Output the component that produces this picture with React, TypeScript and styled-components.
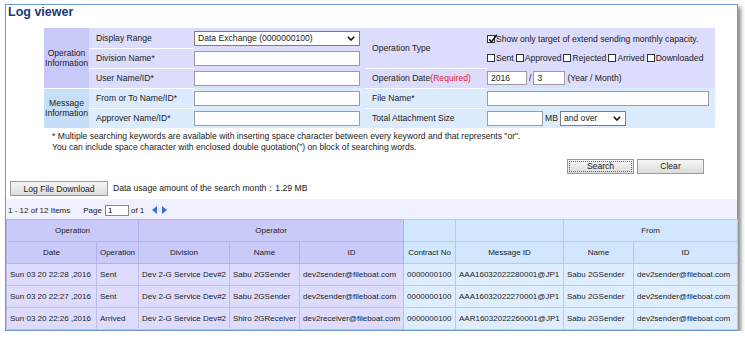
import React from "react";
import styled, { createGlobalStyle } from "styled-components";

const Global = createGlobalStyle`
  html, body { margin: 0; padding: 0; background: #fff; }
  body { font-family: "Liberation Sans", Arial, sans-serif; color: #222; }
  * { box-sizing: border-box; }
`;

const Frame = styled.div`
  margin: 4px 0 0 5px;
  width: 733px;
  border: 1px solid #6f9ad4;
  background: #fff;
  box-shadow: 3px 3px 4px rgba(0, 0, 0, 0.45);
`;

const Title = styled.h1`
  margin: 0;
  padding-left: 2px;
  height: 14px;
  line-height: 15px;
  font-size: 12.5px;
  font-weight: bold;
  color: #1c3a78;
`;

const FormTable = styled.table`
  border-collapse: collapse;
  table-layout: fixed;
  width: 671px;
  margin: 9px 0 0 38px;
  font-size: 8.6px;
`;

const FormRow = styled.tr`
  height: 20px;
`;

type Tone = "op" | "msg";

const SectionCell = styled.td<{ $tone: Tone }>`
  background: ${(p) => (p.$tone === "op" ? "#c9c9f9" : "#c6def8")};
  text-align: center;
  line-height: 10px;
  padding: 0;
  border-bottom: 1px solid #fff;
`;

const LabelCell = styled.td<{ $tone: Tone }>`
  background: ${(p) => (p.$tone === "op" ? "#dcdcfd" : "#dcecfe")};
  padding: 0 0 0 7px;
  white-space: nowrap;
  vertical-align: middle;
  border-bottom: 1px solid #fff;
`;

const ValueCell = styled.td<{ $tone: Tone }>`
  background: ${(p) => (p.$tone === "op" ? "#dcdcfd" : "#dcecfe")};
  padding: 0;
  vertical-align: middle;
  white-space: nowrap;
`;

const Required = styled.span`
  color: #e8192c;
`;

const TextBox = styled.input<{ $w: number }>`
  display: inline-block;
  width: ${(p) => p.$w}px;
  height: 15px;
  border: 1px solid #9c9c9c;
  background: #fff;
  padding: 0 3px;
  font-family: inherit;
  font-size: 8.6px;
  color: #222;
  vertical-align: middle;
  outline: none;
`;

const SmallBox = styled(TextBox)`
  height: 14px;
`;

const SelectBox = styled.div<{ $w: number }>`
  display: inline-flex;
  align-items: center;
  justify-content: space-between;
  width: ${(p) => p.$w}px;
  height: 15px;
  border: 1px solid #7c7c7c;
  background: #fff;
  padding: 0 4px 0 3px;
  font-size: 8.6px;
  vertical-align: middle;
`;

const Inline = styled.div`
  display: flex;
  align-items: center;
  gap: 2px;
`;

const CheckItem = styled.span`
  display: inline-flex;
  align-items: center;
  gap: 1px;
`;

const Box = styled.span`
  position: relative;
  display: inline-block;
  width: 8px;
  height: 8px;
  border: 1px solid #333;
  background: #fff;
`;

const CheckMark = styled.svg`
  position: absolute;
  left: 0;
  top: -2px;
`;

const FirstLine = styled.div`
  padding-top: 3px;
`;

const Notes = styled.div`
  margin: 2px 0 0 46px;
  font-size: 8.6px;
  line-height: 11px;
`;

const ButtonRow = styled.div`
  display: flex;
  justify-content: flex-end;
  gap: 3px;
  margin-top: 6px;
  padding-right: 33px;
`;

const Button = styled.button<{ $w: number; $focus?: boolean }>`
  width: ${(p) => p.$w}px;
  height: 15px;
  padding: 0;
  border: 1px solid #9a9a9a;
  background: linear-gradient(#f6f6f6, #dcdcdc);
  font-family: inherit;
  font-size: 8.6px;
  color: #222;
  outline: ${(p) => (p.$focus ? "1px dotted #666" : "none")};
  outline-offset: -3px;
`;

const DownloadRow = styled.div`
  display: flex;
  align-items: center;
  gap: 5px;
  margin: 8px 0 0 4px;
  height: 14px;
  font-size: 8.6px;
`;

const Colon = styled.span`
  letter-spacing: -3px;
  margin-right: 3px;
`;

const Pager = styled.div`
  display: flex;
  align-items: center;
  margin-top: 3px;
  height: 20px;
  padding: 3px 0 0 2px;
  background: #f0f0fe;
  font-size: 8px;
`;

const PageInput = styled.input`
  width: 24px;
  height: 11px;
  margin: 0 2px 0 3px;
  padding: 0 2px;
  border: 1px solid #8a8a8a;
  font-family: inherit;
  font-size: 8px;
  outline: none;
`;

const Spacer = styled.span<{ $w: number }>`
  display: inline-block;
  width: ${(p) => p.$w}px;
`;

const Grid = styled.table`
  border-collapse: collapse;
  table-layout: fixed;
  width: 731px;
  font-size: 8px;
`;

const GridRow = styled.tr`
  height: 22px;
`;

const Head = styled.th<{ $tone: Tone }>`
  background: ${(p) => (p.$tone === "op" ? "#c9c9fa" : "#d1e7fe")};
  border: 1px solid ${(p) => (p.$tone === "op" ? "#b3b3ec" : "#a9cff5")};
  font-weight: normal;
  text-align: center;
  padding: 0;
  color: #222;
`;

const Cell = styled.td<{ $tone: Tone }>`
  background: ${(p) => (p.$tone === "op" ? "#dddcfd" : "#dfeefe")};
  border: 1px solid ${(p) => (p.$tone === "op" ? "#bdbdef" : "#aad0f5")};
  padding: 0 0 0 3px;
  white-space: nowrap;
  overflow: hidden;
  color: #222;
`;

const Chevron = () => (
  <svg width="8" height="5" viewBox="0 0 8 5">
    <path d="M0.8 0.8 L4 4 L7.2 0.8" fill="none" stroke="#111" strokeWidth="1.6" />
  </svg>
);

const Check = ({ checked, label }: { checked?: boolean; label: string }) => (
  <CheckItem>
    <Box>
      {checked && (
        <CheckMark width="10" height="10" viewBox="0 0 10 10">
          <path d="M1.2 5.2 L3.4 8 L8.8 0.8" fill="none" stroke="#111" strokeWidth="1.5" />
        </CheckMark>
      )}
    </Box>
    {label}
  </CheckItem>
);

const Arrow = ({ dir }: { dir: "l" | "r" }) => (
  <svg width="5" height="8" viewBox="0 0 5 8">
    <polygon points={dir === "l" ? "5,0 0,4 5,8" : "0,0 5,4 0,8"} fill="#3a6fd8" />
  </svg>
);

const cols = [90, 42, 91, 70, 104, 52, 108, 70, 104];

const rows = [
  ["Sun 03 20 22:28 ,2016", "Sent", "Dev 2-G Service Dev#2", "Sabu 2GSender", "dev2sender@fileboat.com", "0000000100", "AAA16032022280001@JP1", "Sabu 2GSender", "dev2sender@fileboat.com"],
  ["Sun 03 20 22:27 ,2016", "Sent", "Dev 2-G Service Dev#2", "Sabu 2GSender", "dev2sender@fileboat.com", "0000000100", "AAA16032022270001@JP1", "Sabu 2GSender", "dev2sender@fileboat.com"],
  ["Sun 03 20 22:26 ,2016", "Arrived", "Dev 2-G Service Dev#2", "Shiro 2GReceiver", "dev2receiver@fileboat.com", "0000000100", "AAR16032022260001@JP1", "Sabu 2GSender", "dev2sender@fileboat.com"],
];

export default function App() {
  return (
    <>
      <Global />
      <Frame>
        <Title>Log viewer</Title>
        <FormTable>
          <colgroup>
            <col style={{ width: 45 }} />
            <col style={{ width: 105 }} />
            <col style={{ width: 171 }} />
            <col style={{ width: 122 }} />
            <col style={{ width: 228 }} />
          </colgroup>
          <tbody>
            <FormRow>
              <SectionCell $tone="op" rowSpan={3}>
                Operation
                <br />
                Information
              </SectionCell>
              <LabelCell $tone="op">Display Range</LabelCell>
              <ValueCell $tone="op">
                <SelectBox $w={166}>
                  <span>Data Exchange (0000000100)</span>
                  <Chevron />
                </SelectBox>
              </ValueCell>
              <LabelCell $tone="op" rowSpan={2}>
                Operation Type
              </LabelCell>
              <ValueCell $tone="op">
                <FirstLine>
                  <Check checked label="Show only target of extend sending monthly capacity." />
                </FirstLine>
              </ValueCell>
            </FormRow>
            <FormRow>
              <LabelCell $tone="op">Division Name*</LabelCell>
              <ValueCell $tone="op">
                <TextBox $w={166} readOnly />
              </ValueCell>
              <ValueCell $tone="op">
                <Inline>
                  <Check label="Sent" />
                  <Check label="Approved" />
                  <Check label="Rejected" />
                  <Check label="Arrived" />
                  <Check label="Downloaded" />
                </Inline>
              </ValueCell>
            </FormRow>
            <FormRow>
              <LabelCell $tone="op">User Name/ID*</LabelCell>
              <ValueCell $tone="op">
                <TextBox $w={166} readOnly />
              </ValueCell>
              <LabelCell $tone="op">
                Operation Date<Required>(Required)</Required>
              </LabelCell>
              <ValueCell $tone="op">
                <Inline>
                  <SmallBox $w={40} readOnly defaultValue="2016" />
                  <span>/</span>
                  <SmallBox $w={32} readOnly defaultValue="3" />
                  <span>(Year / Month)</span>
                </Inline>
              </ValueCell>
            </FormRow>
            <FormRow>
              <SectionCell $tone="msg" rowSpan={2}>
                Message
                <br />
                Information
              </SectionCell>
              <LabelCell $tone="msg">From or To Name/ID*</LabelCell>
              <ValueCell $tone="msg">
                <TextBox $w={166} readOnly />
              </ValueCell>
              <LabelCell $tone="msg">File Name*</LabelCell>
              <ValueCell $tone="msg">
                <TextBox $w={222} readOnly />
              </ValueCell>
            </FormRow>
            <FormRow>
              <LabelCell $tone="msg">Approver Name/ID*</LabelCell>
              <ValueCell $tone="msg">
                <TextBox $w={166} readOnly />
              </ValueCell>
              <LabelCell $tone="msg">Total Attachment Size</LabelCell>
              <ValueCell $tone="msg">
                <Inline>
                  <TextBox $w={56} readOnly />
                  <span>MB</span>
                  <SelectBox $w={66}>
                    <span>and over</span>
                    <Chevron />
                  </SelectBox>
                </Inline>
              </ValueCell>
            </FormRow>
          </tbody>
        </FormTable>
        <Notes>
          * Multiple searching keywords are available with inserting space character between every keyword and that represents "or".
          <br />
          You can include space character with enclosed double quotation(") on block of searching words.
        </Notes>
        <ButtonRow>
          <Button $w={67} $focus>
            Search
          </Button>
          <Button $w={67}>Clear</Button>
        </ButtonRow>
        <DownloadRow>
          <Button $w={98}>Log File Download</Button>
          <span>
            Data usage amount of the search month<Colon>：</Colon>1.29 MB
          </span>
        </DownloadRow>
        <Pager>
          <span>1 - 12 of 12 Items</span>
          <Spacer $w={13} />
          <span>Page</span>
          <PageInput readOnly defaultValue="1" />
          <span>of 1</span>
          <Spacer $w={8} />
          <Arrow dir="l" />
          <Spacer $w={5} />
          <Arrow dir="r" />
        </Pager>
        <Grid>
          <colgroup>
            {cols.map((w, i) => (
              <col key={i} style={{ width: w }} />
            ))}
          </colgroup>
          <thead>
            <GridRow>
              <Head $tone="op" colSpan={2}>Operation</Head>
              <Head $tone="op" colSpan={3}>Operator</Head>
              <Head $tone="msg"></Head>
              <Head $tone="msg"></Head>
              <Head $tone="msg" colSpan={2}>From</Head>
            </GridRow>
            <GridRow>
              <Head $tone="op">Date</Head>
              <Head $tone="op">Operation</Head>
              <Head $tone="op">Division</Head>
              <Head $tone="op">Name</Head>
              <Head $tone="op">ID</Head>
              <Head $tone="msg">Contract No</Head>
              <Head $tone="msg">Message ID</Head>
              <Head $tone="msg">Name</Head>
              <Head $tone="msg">ID</Head>
            </GridRow>
          </thead>
          <tbody>
            {rows.map((r, i) => (
              <GridRow key={i}>
                {r.map((c, j) => (
                  <Cell key={j} $tone={j < 5 ? "op" : "msg"}>
                    {c}
                  </Cell>
                ))}
              </GridRow>
            ))}
          </tbody>
        </Grid>
      </Frame>
    </>
  );
}
